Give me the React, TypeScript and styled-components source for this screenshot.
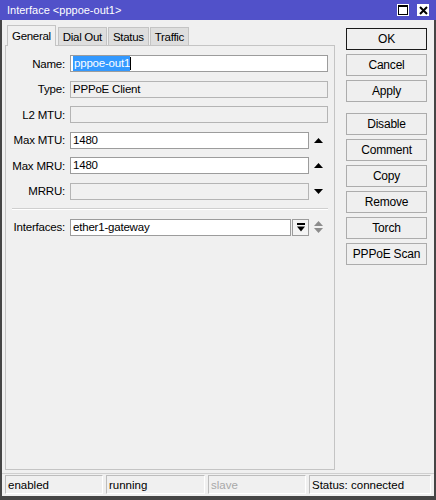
import styled, { createGlobalStyle } from "styled-components";

const GlobalStyle = createGlobalStyle`
  html, body {
    margin: 0;
    padding: 0;
  }
  body {
    font-family: "Liberation Sans", Arial, sans-serif;
    font-size: 11px;
    color: #000;
    background: #f0f0f0;
  }
`;

const Window = styled.div`
  width: 436px;
  height: 500px;
  display: flex;
  flex-direction: column;
  background: #f0f0f0;
  overflow: hidden;
`;

const TitleBar = styled.div`
  height: 20px;
  flex: none;
  display: flex;
  align-items: center;
  padding: 0 7px;
  background: #5151c9;
  color: #fff;
  font-size: 11px;
`;

const TitleText = styled.span`
  flex: 1;
  white-space: nowrap;
`;

const TitleButtons = styled.div`
  display: flex;
  gap: 8px;
`;

const TitleButton = styled.div`
  width: 12px;
  height: 12px;
  background: #fff;
  display: flex;
  align-items: center;
  justify-content: center;
`;

const Frame = styled.div`
  flex: 1;
  display: flex;
  flex-direction: column;
  border: 2px solid #454545;
  border-top: none;
  border-bottom-width: 4px;
  min-height: 0;
`;

const Body = styled.div`
  flex: 1;
  display: flex;
  gap: 11px;
  padding: 5px 7px 3px 3px;
  min-height: 0;
`;

const LeftColumn = styled.div`
  width: 330px;
  display: flex;
  flex-direction: column;
`;

const Tabs = styled.div`
  display: flex;
  align-items: flex-end;
  height: 21px;
  padding-left: 2px;
  gap: 1px;
  position: relative;
  z-index: 1;
`;

const Tab = styled.div<{ $active?: boolean }>`
  box-sizing: border-box;
  height: ${(p) => (p.$active ? "21px" : "19px")};
  padding: 0 ${(p) => (p.$active ? "4px" : "4px")};
  margin-right: ${(p) => (p.$active ? "1px" : "0")};
  display: flex;
  align-items: center;
  border: 1px solid #c4c4c4;
  border-bottom: ${(p) => (p.$active ? "none" : "1px solid #c4c4c4")};
  background: ${(p) => (p.$active ? "#f0f0f0" : "#dedede")};
  color: #000;
  font-size: 11.5px;
  letter-spacing: -0.3px;
  white-space: nowrap;
`;

const Panel = styled.div`
  flex: 1;
  margin-top: -1px;
  border: 1px solid #c4c4c4;
  background: #f0f0f0;
  padding: 9px 6px 0 0;
`;

const Form = styled.div`
  display: grid;
  grid-template-columns: 64px 1fr 19px;
  grid-template-rows: repeat(6, 17px) 2px 17px;
  row-gap: 8.5px;
  align-items: center;
`;

const Label = styled.div`
  text-align: right;
  padding-right: 5px;
  white-space: nowrap;
  font-size: 11.5px;
  letter-spacing: -0.2px;
`;

const Field = styled.div<{ $disabled?: boolean; $span?: boolean }>`
  box-sizing: border-box;
  height: 17px;
  grid-column: ${(p) => (p.$span ? "2 / 4" : "2 / 3")};
  border: 1px solid ${(p) => (p.$disabled ? "#b4b4b4" : "#9c9c9c")};
  background: ${(p) => (p.$disabled ? "#f0f0f0" : "#fff")};
  padding: 0 2px;
  line-height: 15px;
  font-size: 11.5px;
  letter-spacing: -0.2px;
  white-space: nowrap;
  overflow: hidden;
  display: flex;
  align-items: center;
`;

const Selected = styled.span`
  background: #3399ff;
  color: #fff;
  padding: 0 0 0 1px;
`;

const Caret = styled.span`
  display: inline-block;
  width: 1px;
  height: 13px;
  background: #000;
`;

const ArrowCell = styled.div`
  display: flex;
  flex-direction: column;
  align-items: center;
  justify-content: center;
  gap: 2px;
`;

const Separator = styled.div`
  grid-column: 1 / 4;
  height: 0;
  margin-left: 6px;
  border-top: 1px solid #cfcfcf;
  border-bottom: 1px solid #fff;
`;

const ComboRow = styled.div`
  grid-column: 2 / 3;
  display: flex;
  gap: 1px;
  height: 17px;
`;

const ComboField = styled(Field)`
  flex: 1;
`;

const DropButton = styled.div`
  box-sizing: border-box;
  width: 17px;
  height: 17px;
  border: 1px solid #9c9c9c;
  background: #f4f4f4;
  display: flex;
  align-items: center;
  justify-content: center;
`;

const Buttons = styled.div`
  width: 81px;
  margin-top: 3px;
  display: flex;
  flex-direction: column;
  gap: 4px;
`;

const ActionButton = styled.button<{ $primary?: boolean; $gapBefore?: boolean }>`
  box-sizing: border-box;
  width: 81px;
  height: 22px;
  padding: 0;
  margin-top: ${(p) => (p.$gapBefore ? "7px" : "0")};
  border: 1px solid ${(p) => (p.$primary ? "#1a1a1a" : "#acacac")};
  background: #efefef;
  font-family: "Liberation Sans", Arial, sans-serif;
  font-size: 12px;
  letter-spacing: -0.2px;
  color: #000;
`;

const StatusBar = styled.div`
  flex: none;
  display: grid;
  grid-template-columns: 98px 99px 98px 1fr;
  gap: 3px;
  padding: 1px 3px 2px;
  border-top: 1px solid #cfcfcf;
`;

const StatusCell = styled.div<{ $dim?: boolean }>`
  box-sizing: border-box;
  height: 19px;
  padding: 0 2px;
  display: flex;
  align-items: center;
  border-top: 1px solid #bdbdbd;
  border-left: 1px solid #bdbdbd;
  border-right: 1px solid #fff;
  border-bottom: 1px solid #fff;
  color: ${(p) => (p.$dim ? "#a8a8a8" : "#000")};
  font-size: 11.5px;
  white-space: nowrap;
`;

function UpArrow({ color = "#000" }: { color?: string }) {
  return (
    <svg width="9" height="5" viewBox="0 0 9 5">
      <polygon points="0,5 4.5,0 9,5" fill={color} />
    </svg>
  );
}

function DownArrow({ color = "#000" }: { color?: string }) {
  return (
    <svg width="9" height="5" viewBox="0 0 9 5">
      <polygon points="0,0 9,0 4.5,5" fill={color} />
    </svg>
  );
}

function DropGlyph() {
  return (
    <svg width="8" height="9" viewBox="0 0 8 9">
      <rect x="0" y="0" width="8" height="2" fill="#000" />
      <polygon points="0,3.5 8,3.5 4,8.5" fill="#000" />
    </svg>
  );
}

const buttons = ["Disable", "Comment", "Copy", "Remove", "Torch", "PPPoE Scan"];

export default function App() {
  return (
    <>
      <GlobalStyle />
      <Window>
        <TitleBar>
          <TitleText>Interface &lt;pppoe-out1&gt;</TitleText>
          <TitleButtons>
            <TitleButton>
              <svg width="10" height="10" viewBox="0 0 10 10">
                <rect x="0.5" y="0.5" width="9" height="9" fill="none" stroke="#000" />
                <rect x="0" y="0" width="10" height="2" fill="#000" />
              </svg>
            </TitleButton>
            <TitleButton>
              <svg width="9" height="9" viewBox="0 0 9 9">
                <path d="M1 1 L8 8 M8 1 L1 8" stroke="#000" strokeWidth="2" />
              </svg>
            </TitleButton>
          </TitleButtons>
        </TitleBar>
        <Frame>
          <Body>
            <LeftColumn>
              <Tabs>
                <Tab $active>General</Tab>
                <Tab>Dial Out</Tab>
                <Tab>Status</Tab>
                <Tab>Traffic</Tab>
              </Tabs>
              <Panel>
                <Form>
                  <Label>Name:</Label>
                  <Field $span>
                    <Selected>pppoe-out1</Selected>
                    <Caret />
                  </Field>

                  <Label>Type:</Label>
                  <Field $span $disabled>PPPoE Client</Field>

                  <Label>L2 MTU:</Label>
                  <Field $span $disabled />

                  <Label>Max MTU:</Label>
                  <Field>1480</Field>
                  <ArrowCell>
                    <UpArrow />
                  </ArrowCell>

                  <Label>Max MRU:</Label>
                  <Field>1480</Field>
                  <ArrowCell>
                    <UpArrow />
                  </ArrowCell>

                  <Label>MRRU:</Label>
                  <Field $disabled />
                  <ArrowCell>
                    <DownArrow />
                  </ArrowCell>

                  <Separator />

                  <Label>Interfaces:</Label>
                  <ComboRow>
                    <ComboField>ether1-gateway</ComboField>
                    <DropButton>
                      <DropGlyph />
                    </DropButton>
                  </ComboRow>
                  <ArrowCell>
                    <UpArrow color="#8c8c8c" />
                    <DownArrow color="#8c8c8c" />
                  </ArrowCell>
                </Form>
              </Panel>
            </LeftColumn>
            <Buttons>
              <ActionButton $primary>OK</ActionButton>
              <ActionButton>Cancel</ActionButton>
              <ActionButton>Apply</ActionButton>
              {buttons.map((b, i) => (
                <ActionButton key={b} $gapBefore={i === 0}>
                  {b}
                </ActionButton>
              ))}
            </Buttons>
          </Body>
          <StatusBar>
            <StatusCell>enabled</StatusCell>
            <StatusCell>running</StatusCell>
            <StatusCell $dim>slave</StatusCell>
            <StatusCell>Status: connected</StatusCell>
          </StatusBar>
        </Frame>
      </Window>
    </>
  );
}
